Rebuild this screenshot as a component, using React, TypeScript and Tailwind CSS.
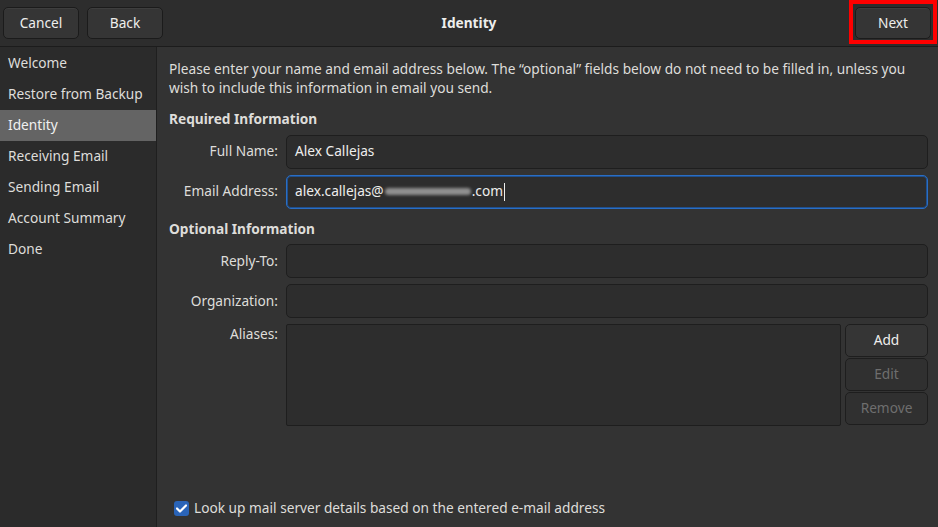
import { useState } from 'react'

const steps = ['Welcome', 'Restore from Backup', 'Identity', 'Receiving Email', 'Sending Email', 'Account Summary', 'Done']

function HeaderButton({ label }: { label: string }) {
  return (
    <button className="h-8 w-[76px] rounded-[5px] border border-[#1b1b1b] bg-[#353535] text-[#eeeeec] shadow-[inset_0_1px_0_#3e3e3e]">
      {label}
    </button>
  )
}

function Field({ label, children }: { label: string; children: React.ReactNode }) {
  return (
    <div className="flex items-center">
      <div className="w-[117px] pr-[8px] text-right text-[#deddda]">{label}</div>
      <div className="flex-1">{children}</div>
    </div>
  )
}

function SideButton({ label, disabled }: { label: string; disabled?: boolean }) {
  return (
    <button
      className={
        'h-[33px] w-full rounded-[5px] border border-[#1e1e1e] ' +
        (disabled ? 'bg-[#303030] text-[#6e6e6e]' : 'bg-[#353535] text-[#eeeeec]')
      }
    >
      {label}
    </button>
  )
}

export default function App() {
  const [lookup, setLookup] = useState(true)

  return (
    <div
      className="flex h-[527px] w-[938px] flex-col overflow-hidden bg-[#333333] text-[13.7px] text-[#eeeeec]"
      style={{ fontFamily: '"Noto Sans", "Open Sans", sans-serif' }}
    >
      {/* Barra de cabecera */}
      <div className="relative flex h-[47px] flex-shrink-0 items-center border-b border-[#1c1c1c] bg-[#2d2d2d] pl-[3px]">
        <div className="flex gap-[8px]">
          <HeaderButton label="Cancel" />
          <HeaderButton label="Back" />
        </div>
        <div className="pointer-events-none absolute inset-x-0 top-[13px] text-center font-bold">Identity</div>
        <div className="mr-[1px] ml-auto flex h-[44px] w-[88px] items-start self-start border-[4px] border-[#ff0000] pt-[3px] pl-[2px]">
          <HeaderButton label="Next" />
        </div>
      </div>

      <div className="flex flex-1">
        {/* Lista de pasos */}
        <div className="w-[157px] flex-shrink-0 border-r border-[#1f1f1f] bg-[#2b2b2b] pt-[1px]">
          {steps.map((s) => (
            <div
              key={s}
              className={
                'flex h-[31px] items-center px-[8px] ' + (s === 'Identity' ? 'bg-[#646464] text-[#f0f0f0]' : 'text-[#deddda]')
              }
            >
              {s}
            </div>
          ))}
        </div>

        {/* Contenido */}
        <div className="flex flex-1 flex-col pt-[12px] pr-[10px] pb-[8px] pl-[12px]">
          <p className="leading-[19px] text-[#deddda]">
            Please enter your name and email address below. The “optional” fields below do not need to be filled in, unless you
            wish to include this information in email you send.
          </p>

          <div className="mt-[12px] font-bold text-[#deddda]">Required Information</div>
          <div className="mt-[5px] flex flex-col gap-[6px]">
            <Field label="Full Name:">
              <div className="flex h-[34px] items-center rounded-[5px] border border-[#1e1e1e] bg-[#2d2d2d] px-[8px]">Alex Callejas</div>
            </Field>
            <Field label="Email Address:">
              <div className="flex h-[34px] items-center rounded-[5px] border border-[#2a6ec4] bg-[#2d2d2d] px-[8px] shadow-[inset_0_0_0_1px_#1f4f8d]">
                alex.callejas@
                <span className="mx-[1px] inline-block h-[7px] w-[86px] rounded-full bg-[#a8a8a8] opacity-80 blur-[1.5px]" />
                .com
                <span className="ml-[1px] inline-block h-[18px] w-px bg-[#eeeeec]" />
              </div>
            </Field>
          </div>

          <div className="mt-[10px] font-bold text-[#deddda]">Optional Information</div>
          <div className="mt-[5px] flex flex-col gap-[6px]">
            <Field label="Reply-To:">
              <div className="h-[34px] rounded-[5px] border border-[#1e1e1e] bg-[#2d2d2d]" />
            </Field>
            <Field label="Organization:">
              <div className="h-[34px] rounded-[5px] border border-[#1e1e1e] bg-[#2d2d2d]" />
            </Field>
            <div className="flex">
              <div className="w-[117px] pr-[8px] text-right text-[#deddda]">Aliases:</div>
              <div className="flex flex-1 gap-[4px]">
                <div className="h-[102px] flex-1 rounded-[2px] border border-[#1e1e1e] bg-[#2d2d2d]" />
                <div className="flex w-[83px] flex-col gap-[1px]">
                  <SideButton label="Add" />
                  <SideButton label="Edit" disabled />
                  <SideButton label="Remove" disabled />
                </div>
              </div>
            </div>
          </div>

          <label className="mt-auto flex items-center gap-[5px] pl-[5px] text-[#deddda]">
            <span
              onClick={() => setLookup(!lookup)}
              className="flex h-[15px] w-[15px] items-center justify-center rounded-[3px] bg-[#2a64b8]"
            >
              {lookup && (
                <svg width="11" height="9" viewBox="0 0 11 9">
                  <path d="M1 4.5 L4 7.5 L10 1.5" stroke="#ffffff" strokeWidth="2.2" fill="none" strokeLinecap="round" strokeLinejoin="round" />
                </svg>
              )}
            </span>
            Look up mail server details based on the entered e-mail address
          </label>
        </div>
      </div>
    </div>
  )
}
